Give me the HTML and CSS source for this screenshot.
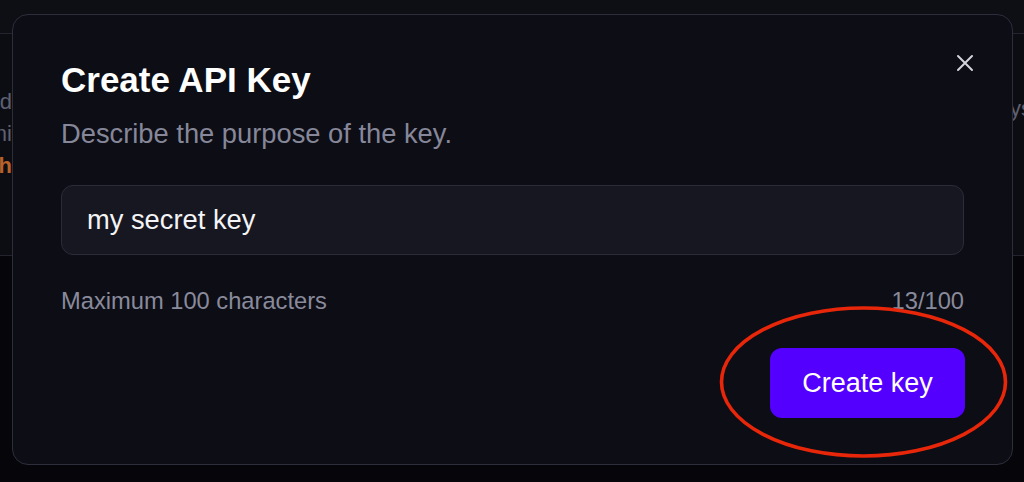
FILE: index.html
```html
<!DOCTYPE html>
<html lang="en">
<head>
<meta charset="utf-8">
<title>Create API Key</title>
<link rel="stylesheet" href="styles.css">
</head>
<body>
<div class="page">
  <div class="topbar"></div>
  <div class="card">
    <div class="card-left">
      <div class="bg-line bg-muted">Created</div>
      <div class="bg-line bg-muted">Admini</div>
      <div class="bg-line bg-accent">Each</div>
    </div>
    <div class="card-mid"></div>
    <div class="card-right">
      <div class="bg-line bg-muted">ys</div>
    </div>
  </div>
  <div class="rest"></div>
</div>

<div class="modal" role="dialog" aria-labelledby="dlg-title">
  <div class="modal-head">
    <h2 id="dlg-title" class="modal-title">Create API Key</h2>
    <button class="close-btn" aria-label="Close">
      <svg viewBox="0 0 24 24" width="24" height="24" aria-hidden="true">
        <path d="M5 5 L19 19 M19 5 L5 19" fill="none" stroke="#d4d5dc" stroke-width="2" stroke-linecap="round"/>
      </svg>
    </button>
  </div>
  <p class="modal-desc">Describe the purpose of the key.</p>
  <div class="field">my secret key</div>
  <div class="field-meta">
    <span>Maximum 100 characters</span>
    <span>13/100</span>
  </div>
  <div class="actions">
    <button class="primary-btn">Create key</button>
  </div>
</div>

<svg class="annotation" width="1024" height="482" viewBox="0 0 1024 482" aria-hidden="true">
  <ellipse cx="863.5" cy="382" rx="142" ry="74" fill="none" stroke="#e8260a" stroke-width="3.6"/>
</svg>
</body>
</html>
```

FILE: styles.css
```css
html, body {
  margin: 0;
  padding: 0;
}

body {
  width: 1024px;
  height: 482px;
  overflow: hidden;
  background: #06060a;
  font-family: "Liberation Sans", Arial, sans-serif;
  position: relative;
}

.page {
  display: flex;
  flex-direction: column;
  height: 482px;
}

.topbar {
  height: 33px;
  background: #0e0f15;
  border-bottom: 1px solid #23242e;
}

.card {
  height: 221px;
  background: #0c0d13;
  border-bottom: 1px solid #23242e;
  display: flex;
}

.card-left {
  width: 12px;
  overflow: hidden;
  display: flex;
  flex-direction: column;
  align-items: flex-end;
  padding-top: 55px;
  gap: 7px;
}

.card-mid {
  flex: 1;
}

.card-right {
  width: 14px;
  overflow: hidden;
  padding-top: 62px;
}

.bg-line {
  white-space: nowrap;
  font-size: 22px;
  line-height: 25px;
}

.bg-muted {
  color: #5f6070;
}

.bg-accent {
  color: #b8612a;
  font-weight: bold;
}

.rest {
  flex: 1;
  background: #06060a;
}

.modal {
  position: absolute;
  left: 12px;
  top: 14px;
  width: 1001px;
  height: 451px;
  box-sizing: border-box;
  background: #0c0d15;
  border: 1px solid #2c2e3c;
  border-radius: 16px;
  padding: 45px 48px 0 48px;
  display: flex;
  flex-direction: column;
}

.modal-head {
  display: flex;
  justify-content: space-between;
  align-items: flex-start;
}

.modal-title {
  margin: 0;
  font-size: 35px;
  line-height: 40px;
  font-weight: bold;
  color: #ffffff;
}

.close-btn {
  width: 24px;
  height: 24px;
  margin: -9px -13px 0 0;
  padding: 0;
  border: 0;
  background: none;
  display: flex;
}

.modal-desc {
  margin: 18px 0 0 0;
  font-size: 27.3px;
  line-height: 32px;
  color: #868799;
}

.field {
  margin-top: 35px;
  height: 70px;
  box-sizing: border-box;
  background: #161720;
  border: 1px solid #2a2c39;
  border-radius: 12px;
  padding: 0 25px;
  display: flex;
  align-items: center;
  font-size: 27.3px;
  line-height: 32px;
  color: #f4f4f6;
}

.field-meta {
  margin-top: 32px;
  display: flex;
  justify-content: space-between;
  font-size: 23.7px;
  line-height: 28px;
  color: #898a9b;
}

.actions {
  margin-top: 33px;
  display: flex;
  justify-content: flex-end;
  margin-right: -1px;
}

.primary-btn {
  width: 195px;
  height: 70px;
  border: 0;
  border-radius: 12px;
  background: #5300ff;
  color: #ffffff;
  font-family: "Liberation Sans", Arial, sans-serif;
  font-size: 27px;
  padding: 0;
}

.annotation {
  position: absolute;
  left: 0;
  top: 0;
  pointer-events: none;
}
```
